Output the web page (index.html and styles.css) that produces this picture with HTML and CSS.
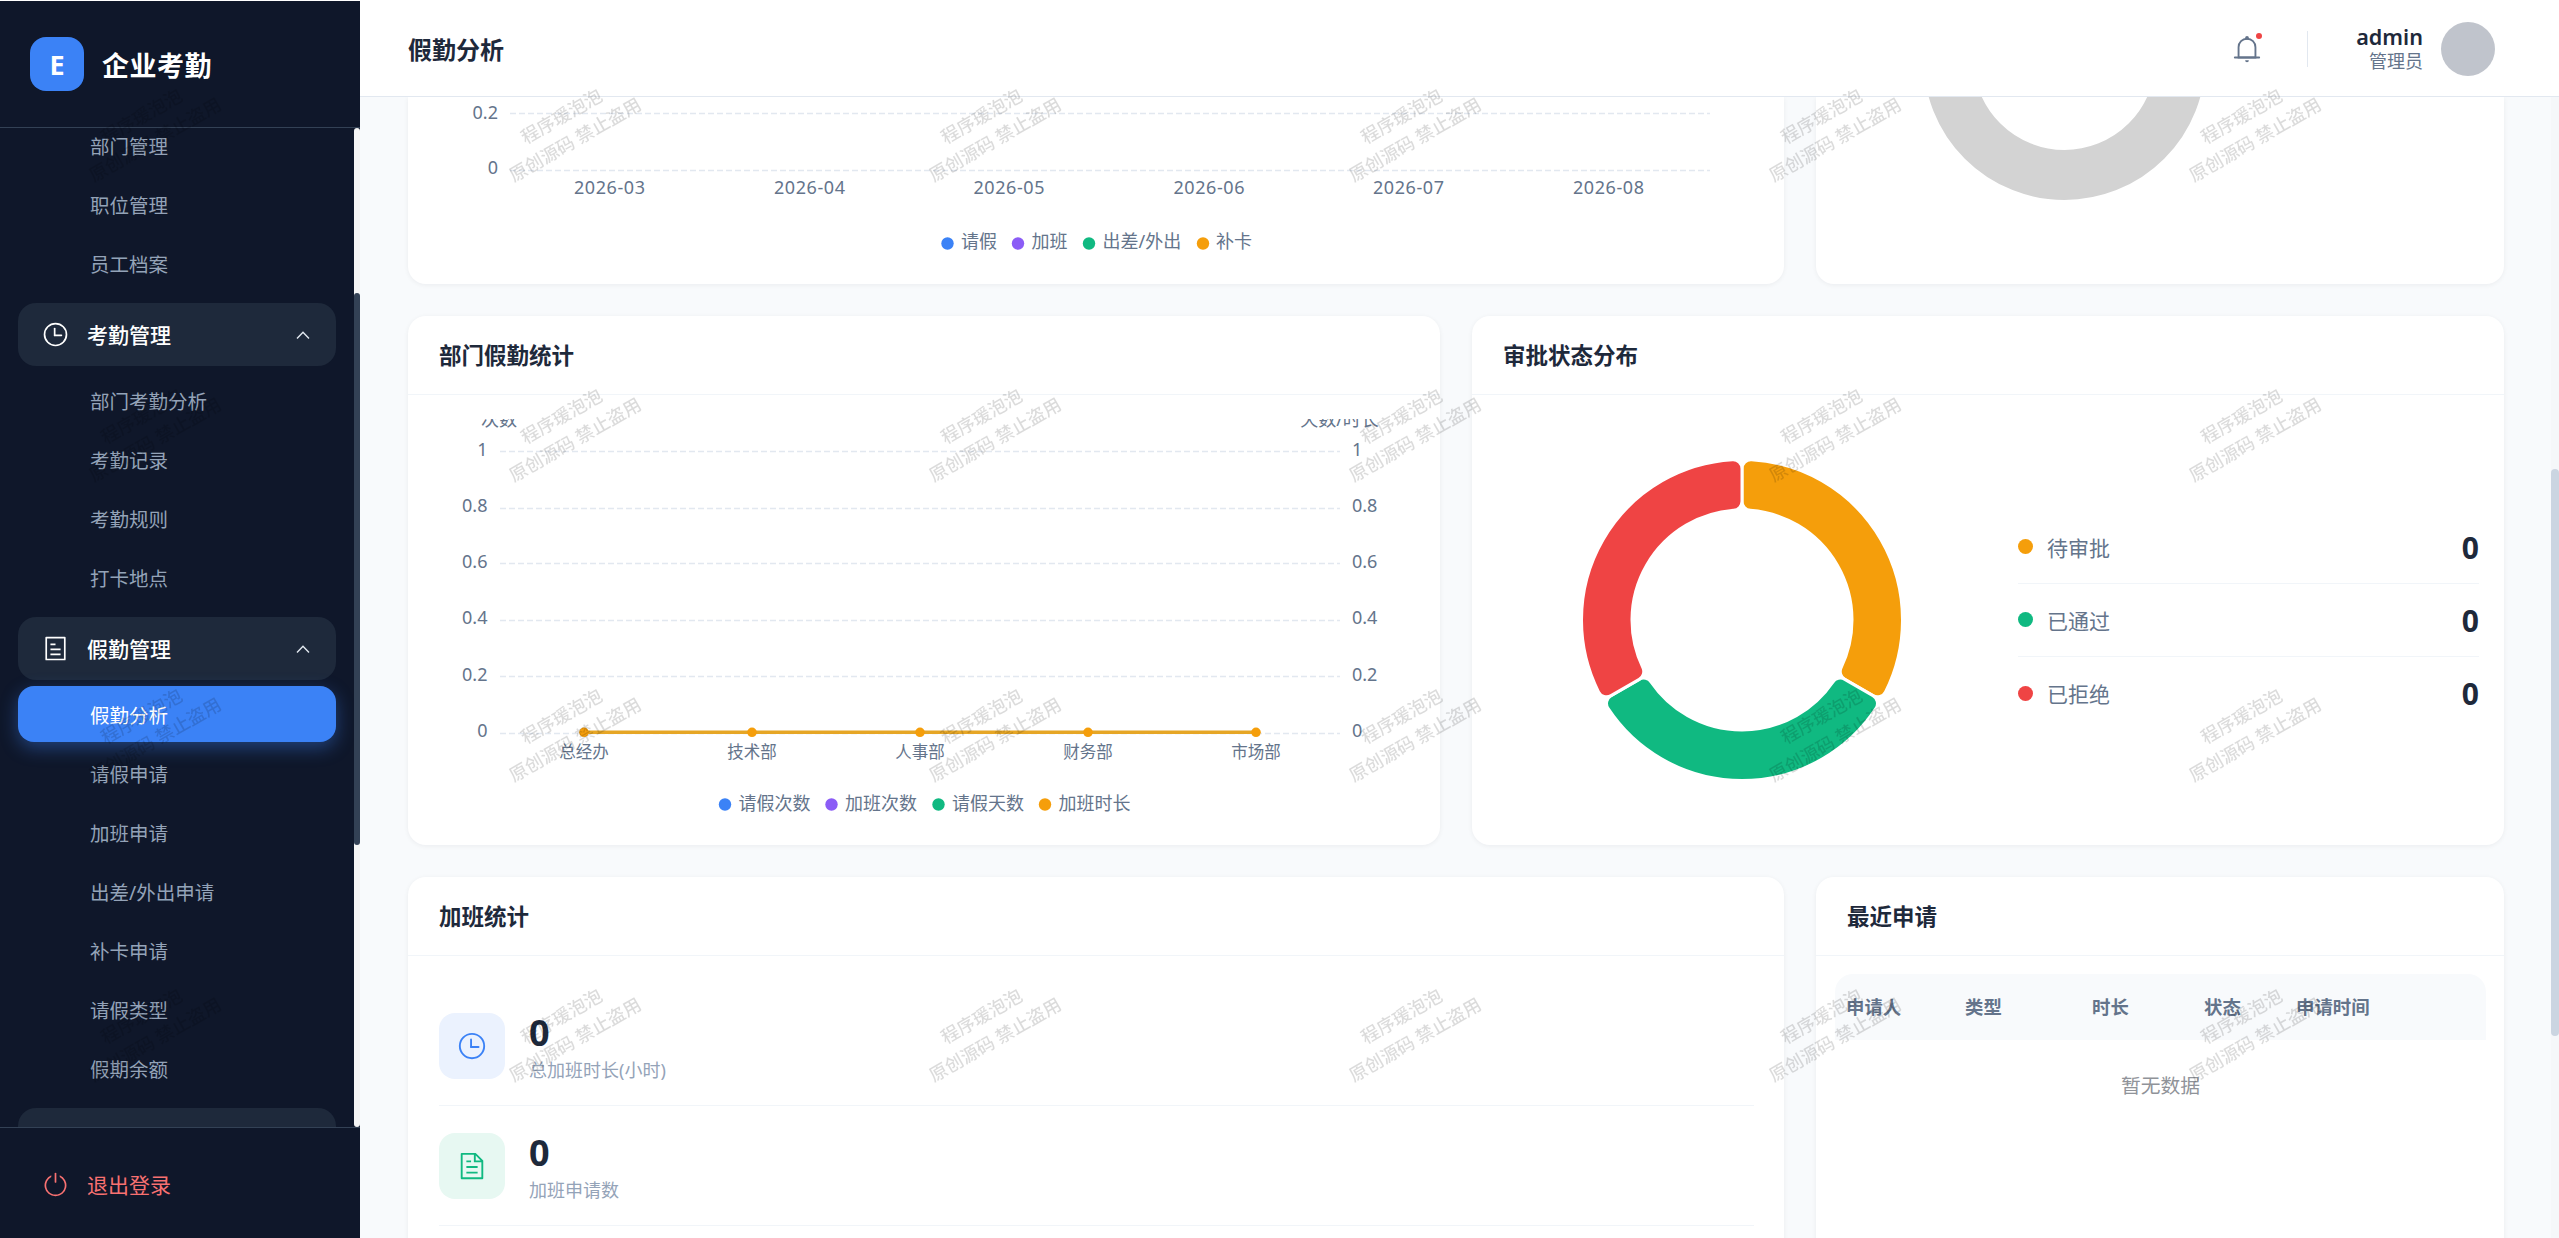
FILE: index.html
```html
<!DOCTYPE html>
<html lang="zh-CN">
<head>
	<meta charset="UTF-8">
	<title>假勤分析</title>
	<link rel="stylesheet" href="styles.css">
</head>
<body>
	<div id="app">
		<aside class="sidebar">
			<div class="logo">
				<span class="logo-icon">E</span>
				<span class="logo-text">企业考勤</span>
			</div>
			<div class="menu-wrap">
				<nav class="menu">
					<div class="sub-menu first">
						<a class="item">部门管理</a>
						<a class="item">职位管理</a>
						<a class="item">员工档案</a>
					</div>
					<div class="group">
						<svg class="group-icon" viewBox="0 0 1024 1024"><path d="M512 896a384 384 0 1 0 0-768 384 384 0 0 0 0 768m0 64a448 448 0 1 1 0-896 448 448 0 0 1 0 896"/><path d="M480 256a32 32 0 0 1 32 32v256a32 32 0 0 1-64 0V288a32 32 0 0 1 32-32"/><path d="M480 512h256q32 0 32 32t-32 32H480q-32 0-32-32t32-32"/></svg>
						<span>考勤管理</span>
						<svg class="arrow" viewBox="0 0 18 18"><path d="M3 12.5 9 6.3l6 6.2"/></svg>
					</div>
					<div class="sub-menu">
						<a class="item">部门考勤分析</a>
						<a class="item">考勤记录</a>
						<a class="item">考勤规则</a>
						<a class="item">打卡地点</a>
					</div>
					<div class="group">
						<svg class="group-icon" viewBox="0 0 1024 1024"><path d="M192 128v768h640V128zm-32-64h704a32 32 0 0 1 32 32v832a32 32 0 0 1-32 32H160a32 32 0 0 1-32-32V96a32 32 0 0 1 32-32m160 448h384v64H320zm0-192h192v64H320zm0 384h384v64H320z"/></svg>
						<span>假勤管理</span>
						<svg class="arrow" viewBox="0 0 18 18"><path d="M3 12.5 9 6.3l6 6.2"/></svg>
					</div>
					<div class="sub-menu">
						<a class="item active">假勤分析</a>
						<a class="item">请假申请</a>
						<a class="item">加班申请</a>
						<a class="item">出差/外出申请</a>
						<a class="item">补卡申请</a>
						<a class="item">请假类型</a>
						<a class="item">假期余额</a>
					</div>
					<div class="group"></div>
				</nav>
				<div class="menu-bar"><div class="menu-thumb"></div></div>
			</div>
			<div class="logout">
				<svg class="group-icon" viewBox="0 0 1024 1024"><path d="M352 159.9v70.5a352 352 0 1 0 320 0v-70.5A416.1 416.1 0 0 1 512 960a416 416 0 0 1-160-800.1z"/><path d="M512 64q32 0 32 32v320q0 32-32 32t-32-32V96q0-32 32-32"/></svg>
				<span>退出登录</span>
			</div>
		</aside>

		<div class="main">
			<header class="header">
				<h1 class="page-title">假勤分析</h1>
				<div class="header-right">
					<div class="bell">
						<svg viewBox="0 0 1024 1024"><path d="M512 64a64 64 0 0 1 64 64v64H448v-64a64 64 0 0 1 64-64"/><path d="M256 768h512V448a256 256 0 1 0-512 0zm256-640a320 320 0 0 1 320 320v384H192V448a320 320 0 0 1 320-320"/><path d="M96 768h832q32 0 32 32t-32 32H96q-32 0-32-32t32-32m352 128h128a64 64 0 0 1-128 0"/></svg>
						<i class="badge"></i>
					</div>
					<div class="user">
						<div class="user-info">
							<span class="user-name">admin</span>
							<span class="user-role">管理员</span>
						</div>
						<div class="avatar"></div>
					</div>
				</div>
			</header>

			<div class="page">
				<div class="content">
					<div class="row row-21 row-top">
						<section class="card">
							<svg class="chart" viewBox="408 97 1376 187">
								<g class="grid">
									<path d="M510 113.5H1710M510 170.5H1710"/>
								</g>
								<g class="label end">
									<text x="498" y="118.5">0.2</text>
									<text x="498" y="173.5">0</text>
								</g>
								<g class="label mid">
									<text x="609.5" y="194" textLength="71">2026-03</text>
									<text x="809.5" y="194" textLength="71">2026-04</text>
									<text x="1009" y="194" textLength="71">2026-05</text>
									<text x="1209" y="194" textLength="71">2026-06</text>
									<text x="1408.5" y="194" textLength="71">2026-07</text>
									<text x="1608.5" y="194" textLength="71">2026-08</text>
								</g>
								<circle class="blue" cx="947.5" cy="243.5" r="6.2"/>
								<circle class="purple" cx="1018" cy="243.5" r="6.2"/>
								<circle class="green" cx="1089" cy="243.5" r="6.2"/>
								<circle class="orange" cx="1203" cy="243.5" r="6.2"/>
								<g class="label">
									<text x="961" y="248">请假</text>
									<text x="1031.5" y="248">加班</text>
									<text x="1102.5" y="248">出差/外出</text>
									<text x="1216" y="248">补卡</text>
								</g>
							</svg>
						</section>
						<section class="card">
							<svg class="chart" viewBox="1816 97 688 187">
								<circle class="empty-ring" cx="2064.5" cy="59" r="116"/>
							</svg>
						</section>
					</div>

					<div class="row row-11">
						<section class="card">
							<h2 class="card-title">部门假勤统计</h2>
							<svg class="chart" viewBox="408 395 1032 450">
								<defs>
									<clipPath id="chartClip"><path d="M439 419h970v402H439z"/></clipPath>
								</defs>
								<g class="label mid" clip-path="url(#chartClip)">
									<text x="499" y="425.5">次数</text>
									<text x="1339.5" y="425.5">天数/时长</text>
								</g>
								<g class="grid">
									<path d="M500 451.5H1340M500 508.5H1340M500 563.5H1340M500 620.5H1340M500 676.5H1340M500 733.5H1340"/>
								</g>
								<g class="label end">
									<text x="487.5" y="455.5">1</text>
									<text x="487.5" y="511.5">0.8</text>
									<text x="487.5" y="567.5">0.6</text>
									<text x="487.5" y="623.5">0.4</text>
									<text x="487.5" y="680.5">0.2</text>
									<text x="487.5" y="736.5">0</text>
								</g>
								<g class="label">
									<text x="1352" y="455.5">1</text>
									<text x="1352" y="511.5">0.8</text>
									<text x="1352" y="567.5">0.6</text>
									<text x="1352" y="623.5">0.4</text>
									<text x="1352" y="680.5">0.2</text>
									<text x="1352" y="736.5">0</text>
								</g>
								<path class="line" d="M584 732.3H1256"/>
								<circle class="orange" cx="584" cy="732.3" r="4.8"/>
								<circle class="orange" cx="752" cy="732.3" r="4.8"/>
								<circle class="orange" cx="920" cy="732.3" r="4.8"/>
								<circle class="orange" cx="1088" cy="732.3" r="4.8"/>
								<circle class="orange" cx="1256" cy="732.3" r="4.8"/>
								<g class="label small mid">
									<text x="584" y="757.5">总经办</text>
									<text x="752" y="757.5">技术部</text>
									<text x="920" y="757.5">人事部</text>
									<text x="1088" y="757.5">财务部</text>
									<text x="1256" y="757.5">市场部</text>
								</g>
								<circle class="blue" cx="725" cy="804.5" r="6.2"/>
								<circle class="purple" cx="831.5" cy="804.5" r="6.2"/>
								<circle class="green" cx="938.5" cy="804.5" r="6.2"/>
								<circle class="orange" cx="1045" cy="804.5" r="6.2"/>
								<g class="label">
									<text x="738.5" y="809.5">请假次数</text>
									<text x="845" y="809.5">加班次数</text>
									<text x="952" y="809.5">请假天数</text>
									<text x="1058.5" y="809.5">加班时长</text>
								</g>
							</svg>
						</section>
						<section class="card">
							<h2 class="card-title">审批状态分布</h2>
							<div class="status">
								<svg class="donut" viewBox="-165 -165 330 330">
									<path class="slice orange" d="M0-118.66V-151.23A9 9 0 0 1 9.54-160.22A160.5 160.5 0 0 1 143.52 71.86A9 9 0 0 1 130.97 75.62L102.76 59.33A9 9 0 0 1 99.15 47.64A110 110 0 0 0 8.32-109.68A9 9 0 0 1 0-118.66z"/>
									<path class="slice green" transform="rotate(120)" d="M0-118.66V-151.23A9 9 0 0 1 9.54-160.22A160.5 160.5 0 0 1 143.52 71.86A9 9 0 0 1 130.97 75.62L102.76 59.33A9 9 0 0 1 99.15 47.64A110 110 0 0 0 8.32-109.68A9 9 0 0 1 0-118.66z"/>
									<path class="slice red" transform="rotate(240)" d="M0-118.66V-151.23A9 9 0 0 1 9.54-160.22A160.5 160.5 0 0 1 143.52 71.86A9 9 0 0 1 130.97 75.62L102.76 59.33A9 9 0 0 1 99.15 47.64A110 110 0 0 0 8.32-109.68A9 9 0 0 1 0-118.66z"/>
								</svg>
								<ul class="status-list">
									<li><i class="dot bg-orange"></i><span>待审批</span><b>0</b></li>
									<li><i class="dot bg-green"></i><span>已通过</span><b>0</b></li>
									<li><i class="dot bg-red"></i><span>已拒绝</span><b>0</b></li>
								</ul>
							</div>
						</section>
					</div>

					<div class="row row-21 row-bottom">
						<section class="card">
							<h2 class="card-title">加班统计</h2>
							<div class="stats">
								<div class="stat">
									<div class="stat-icon stat-blue">
										<svg viewBox="0 0 1024 1024"><path d="M512 896a384 384 0 1 0 0-768 384 384 0 0 0 0 768m0 64a448 448 0 1 1 0-896 448 448 0 0 1 0 896"/><path d="M480 256a32 32 0 0 1 32 32v256a32 32 0 0 1-64 0V288a32 32 0 0 1 32-32"/><path d="M480 512h256q32 0 32 32t-32 32H480q-32 0-32-32t32-32"/></svg>
									</div>
									<div class="stat-info">
										<div class="stat-num">0</div>
										<div class="stat-label">总加班时长(小时)</div>
									</div>
								</div>
								<div class="stat">
									<div class="stat-icon stat-green">
										<svg viewBox="0 0 1024 1024"><path d="M832 384H576V128H192v768h640zm-26.500-64L640 154.500V320zM160 64h480l256 256v608a32 32 0 0 1-32 32H160a32 32 0 0 1-32-32V96a32 32 0 0 1 32-32m160 448h384v64H320zm0-192h160v64H320zm0 384h384v64H320z"/></svg>
									</div>
									<div class="stat-info">
										<div class="stat-num">0</div>
										<div class="stat-label">加班申请数</div>
									</div>
								</div>
							</div>
						</section>
						<section class="card">
							<h2 class="card-title">最近申请</h2>
							<div class="recent">
								<div class="recent-head">
									<span>申请人</span>
									<span>类型</span>
									<span>时长</span>
									<span>状态</span>
									<span>申请时间</span>
								</div>
								<div class="recent-empty">暂无数据</div>
							</div>
						</section>
					</div>
				</div>
				<div class="page-bar"><div class="page-thumb"></div></div>
			</div>
		</div>
	</div>

	<div id="watermark"></div>

	<script type="text/javascript">
		var $watermark = document.getElementById("watermark");
		for (var i=0;i<24;i++){
			var mark = document.createElement("div");
			mark.className = "mark";
			mark.innerHTML = "<span>程序瑗泡泡<br>原创源码 禁止盗用</span>";
			$watermark.appendChild(mark);
		}
	</script>
</body>
</html>
```

FILE: styles.css
```css
*{
	margin: 0;
	padding: 0;
	box-sizing: border-box;
}
html,body{
	height: 100%;
	overflow: hidden;
}
body{
	font-family: "Noto Sans", "Noto Sans CJK SC", sans-serif;
	color: #1e293b;
	background: #f8fafc;
}
ul{
	list-style: none;
}
#app{
	display: flex;
	height: 100vh;
}

/* 侧边栏 */
.sidebar{
	width: 360px;
	flex: none;
	display: flex;
	flex-direction: column;
	background: #0f172a;
	border-top: 1px solid #fff;
}
.logo{
	height: 127px;
	flex: none;
	display: flex;
	align-items: center;
	padding: 0 30px;
	border-bottom: 1px solid #334155;
}
.logo-icon{
	width: 54px;
	height: 54px;
	border-radius: 16px;
	background: #3b82f6;
	color: #fff;
	font-size: 27px;
	font-weight: bold;
	line-height: 55px;
	text-align: center;
}
.logo-text{
	margin-left: 18px;
	padding-top: 3px;
	color: #fff;
	font-size: 27px;
	font-weight: bold;
	letter-spacing: 0.5px;
	line-height: 40px;
}
.menu-wrap{
	flex: 1;
	min-height: 0;
	display: flex;
	overflow: hidden;
}
.menu{
	flex: 1;
	padding: 0 18px;
}
.menu-bar{
	width: 6px;
	background: #f5f5f5;
	border-radius: 3px;
	padding-top: 165px;
}
.menu-thumb{
	height: 552px;
	border-radius: 3px;
	background: #334155;
}
.sub-menu{
	padding: 6px 0 9px;
}
.sub-menu.first{
	margin-top: -17px;
}
.item{
	display: block;
	height: 56px;
	margin-bottom: 3px;
	padding-left: 72px;
	border-radius: 16px;
	color: #94a3b8;
	font-size: 19.5px;
	line-height: 59px;
}
.item.active{
	background: #3b82f6;
	color: #fff;
	box-shadow: 0 6px 18px rgba(59,130,246,0.4);
}
.group{
	height: 63px;
	display: flex;
	align-items: center;
	padding: 0 24px;
	border-radius: 18px;
	background: #1e293b;
	color: #fff;
	font-size: 21px;
	font-weight: 500;
}
.group span, .logout span{
	padding-bottom: 2px;
}
.group-icon{
	width: 27px;
	height: 27px;
	margin-right: 18px;
	fill: currentColor;
}
.arrow{
	width: 18px;
	height: 18px;
	margin-left: auto;
	fill: none;
	stroke: #e2e8f0;
	stroke-width: 1.4;
}
.logout{
	height: 111px;
	flex: none;
	display: flex;
	align-items: center;
	padding: 3px 42px 0;
	border-top: 1px solid #334155;
	color: #f87171;
	font-size: 21px;
}

/* 顶栏 */
.main{
	flex: 1;
	min-width: 0;
	display: flex;
	flex-direction: column;
}
.header{
	height: 97px;
	flex: none;
	display: flex;
	align-items: center;
	justify-content: space-between;
	padding: 2px 64px 0 48px;
	background: #fff;
	border-bottom: 1px solid #e2e8f0;
}
.page-title{
	padding-bottom: 2px;
	font-size: 24px;
	font-weight: 600;
}
.header-right{
	display: flex;
	align-items: center;
}
.bell{
	position: relative;
	width: 30px;
	height: 30px;
	margin-right: 45px;
}
.bell svg{
	display: block;
	width: 30px;
	height: 30px;
	fill: #64748b;
}
.badge{
	position: absolute;
	top: -1px;
	right: 0;
	width: 6px;
	height: 6px;
	border-radius: 50%;
	background: #ef4444;
}
.user{
	display: flex;
	align-items: center;
}
.user::before{
	content: "";
	width: 1px;
	height: 36px;
	margin-right: 48px;
	background: #e2e8f0;
}
.user-info{
	display: flex;
	flex-direction: column;
	align-items: flex-end;
	margin-right: 18px;
}
.user-name{
	font-size: 21.6px;
	font-weight: 600;
	line-height: 24px;
}
.user-role{
	font-size: 18px;
	line-height: 24px;
	color: #64748b;
}
.avatar{
	width: 54px;
	height: 54px;
	border-radius: 50%;
	background: #c0c4cc;
}

/* 内容区 */
.page{
	flex: 1;
	min-height: 0;
	display: flex;
	overflow: hidden;
}
.content{
	flex: 1;
	min-width: 0;
	padding: 0 47px 0 48px;
}
.row{
	display: grid;
	column-gap: 32px;
	margin-bottom: 32px;
}
.row-21{
	grid-template-columns: 1376px 1fr;
}
.row-11{
	grid-template-columns: 1fr 1fr;
}
.row-top{
	height: 187px;
}
.row-top .card{
	border-radius: 0 0 18px 18px;
}
.row-11{
	height: 529px;
}
.row-bottom{
	height: 600px;
}
.card{
	background: #fff;
	border-radius: 18px;
	box-shadow: 0 1px 5px rgba(15,23,42,0.06);
	overflow: hidden;
}
.card-title{
	height: 79px;
	padding: 0 31px;
	border-bottom: 1px solid #f1f5f9;
	font-size: 22.5px;
	font-weight: 600;
	line-height: 79px;
}
.page-bar{
	width: 8px;
	padding-top: 372px;
	background: #f5f7f9;
}
.page-thumb{
	height: 567px;
	border-radius: 4px;
	background: #cbd5e1;
}

/* 图表 */
.chart{
	display: block;
	width: 100%;
}
.label{
	font-size: 18px;
	fill: #64748b;
}
.small{
	font-size: 16.5px;
}
.end{
	text-anchor: end;
}
.mid{
	text-anchor: middle;
}
.grid path{
	stroke: #e2e8f0;
	stroke-width: 1.5;
	stroke-dasharray: 6 3;
}
.line{
	stroke: #e6a626;
	stroke-width: 3.5;
}
.empty-ring{
	fill: none;
	stroke: #d3d3d3;
	stroke-width: 50;
}
.blue{ fill: #3b82f6; }
.purple{ fill: #8b5cf6; }
.green{ fill: #10b981; }
.orange{ fill: #f59e0b; }
.red{ fill: #ef4444; }
.slice{
	stroke: #fff;
	stroke-width: 3;
}

/* 审批状态 */
.status{
	height: 450px;
	display: flex;
	align-items: center;
	padding: 0 25px 0 105px;
}
.donut{
	width: 330px;
	height: 330px;
}
.status-list{
	flex: 1;
	margin-left: 111px;
}
.status-list li{
	height: 73px;
	display: flex;
	align-items: center;
	border-bottom: 1px solid #f1f5f9;
	color: #64748b;
	font-size: 21px;
}
.status-list li:last-child{
	border-bottom: none;
}
.status-list b{
	margin-left: auto;
	padding-top: 2px;
	color: #1e293b;
	font-size: 30px;
	line-height: 40px;
}
.dot{
	width: 15px;
	height: 15px;
	margin-right: 14px;
	border-radius: 50%;
}
.bg-orange{ background: #f59e0b; }
.bg-green{ background: #10b981; }
.bg-red{ background: #ef4444; }

/* 加班统计 */
.stats{
	padding: 30px 30px 30px 31px;
}
.stat{
	height: 120px;
	display: flex;
	align-items: center;
	border-bottom: 1px solid #f1f5f9;
}
.stat-icon{
	width: 66px;
	height: 66px;
	margin-right: 24px;
	padding: 18px;
	border-radius: 16px;
}
.stat-icon svg{
	display: block;
	width: 30px;
	height: 30px;
	fill: currentColor;
}
.stat-blue{
	background: #ebf2fe;
	color: #3b82f6;
}
.stat-green{
	background: #e7f8f2;
	color: #10b981;
}
.stat-info{
	padding-top: 4px;
}
.stat-num{
	font-size: 36px;
	font-weight: bold;
	line-height: 42px;
}
.stat-label{
	margin-top: 3px;
	font-size: 18px;
	line-height: 27px;
	color: #94a3b8;
}

/* 最近申请 */
.recent{
	padding: 18px 18px 0 19px;
}
.recent-head{
	height: 66px;
	display: grid;
	grid-template-columns: 119px 127px 112px 92px 1fr;
	align-items: center;
	padding: 0 0 3px 11px;
	border-radius: 18px 18px 0 0;
	background: #f8fafc;
	color: #64748b;
	font-size: 18.4px;
	font-weight: 600;
}
.recent-empty{
	height: 90px;
	color: #909399;
	font-size: 19.8px;
	line-height: 92px;
	text-align: center;
}

/* 水印 */
#watermark{
	position: fixed;
	top: -22px;
	left: -62px;
	display: grid;
	grid-template-columns: repeat(6, 420px);
	grid-auto-rows: 300px;
	pointer-events: none;
}
.mark{
	display: flex;
	align-items: center;
	justify-content: center;
	color: rgba(0,0,0,0.14);
	font-size: 18px;
	font-weight: 500;
	line-height: 27px;
	text-align: center;
}
.mark span{
	transform: rotate(-30deg);
}
```
